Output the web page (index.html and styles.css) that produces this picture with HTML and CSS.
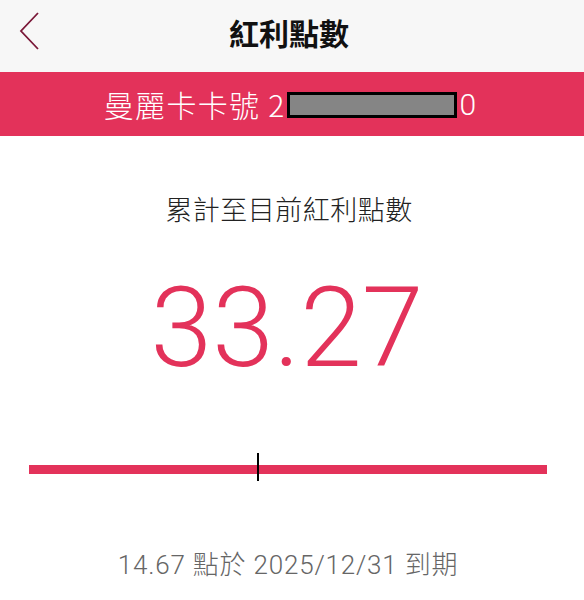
FILE: index.html
```html
<!DOCTYPE html>
<html lang="zh-Hant">
<head>
<meta charset="utf-8">
<link rel="stylesheet" href="styles.css">
</head>
<body>
<div class="page">
  <header class="nav">
    <svg class="back" width="24" height="40" viewBox="0 0 24 40"><polyline points="20,1 3,19 20,37" fill="none" stroke="#7a1838" stroke-width="1.8"/></svg>
    <h1 class="title">紅利點數</h1>
  </header>
  <div class="card-bar">
    <span class="card-label">曼麗卡卡號 2</span><span class="mask"></span><span class="card-tail">0</span>
  </div>
  <main class="content">
    <p class="subtitle">累計至目前紅利點數</p>
    <p class="points">33.27</p>
    <div class="meter"><span class="tick"></span></div>
    <p class="expire">14.67 點於 2025/12/31 到期</p>
  </main>
</div>
</body>
</html>
```

FILE: styles.css
```css
* { box-sizing: border-box; margin: 0; padding: 0; }
html, body { background: #ffffff; }
body { width: 584px; height: 600px; overflow: hidden; font-family: "Roboto", "Noto Sans CJK TC", sans-serif; }
.page { display: flex; flex-direction: column; }
.nav {
  height: 72px;
  background: #f7f7f7;
  display: flex;
  align-items: center;
  justify-content: center;
  padding: 0 6px 9px 0;
  position: relative;
}
.back { position: absolute; left: 18px; top: 12px; }
.title {
  font-family: "Noto Sans CJK TC", sans-serif;
  font-size: 30px;
  font-weight: 700;
  color: #111;
  letter-spacing: 0;
}
.card-bar {
  height: 64px;
  background: #e3325a;
  display: flex;
  align-items: center;
  justify-content: center;
  color: #fff;
  font-size: 30px;
  font-family: "Noto Sans CJK TC", sans-serif;
  font-weight: 300;
  padding-right: 4px;
}
.card-label { letter-spacing: 1.3px; }
.mask {
  width: 170px;
  height: 26px;
  background: #858585;
  border: 3px solid #000;
  margin: 2px 3px 0 1px;
}
.card-tail { font-family: "Roboto", sans-serif; font-weight: 300; }
.content { display: flex; flex-direction: column; align-items: center; }
.subtitle {
  margin-top: 53px;
  font-family: "Noto Sans CJK TC", sans-serif;
  font-weight: 300;
  font-size: 27px;
  color: #222;
  letter-spacing: 0.5px;
  padding-right: 6px;
}
.points {
  margin-top: 35px;
  font-family: "Roboto", sans-serif;
  font-weight: 300;
  font-size: 111px;
  line-height: 130px;
  color: #e3325a;
  padding-right: 10px;
}
.meter {
  margin-top: 72px;
  width: 518px;
  height: 9px;
  background: #e3325a;
  position: relative;
  margin-right: 8px;
}
.tick {
  position: absolute;
  left: 228px;
  top: -12px;
  width: 2px;
  height: 28px;
  background: #000;
}
.expire {
  margin-top: 70px;
  font-family: "Roboto", "Noto Sans CJK TC", sans-serif;
  font-weight: 300;
  font-size: 26px;
  letter-spacing: 0.8px;
  color: #666;
  padding-right: 8px;
}
```
